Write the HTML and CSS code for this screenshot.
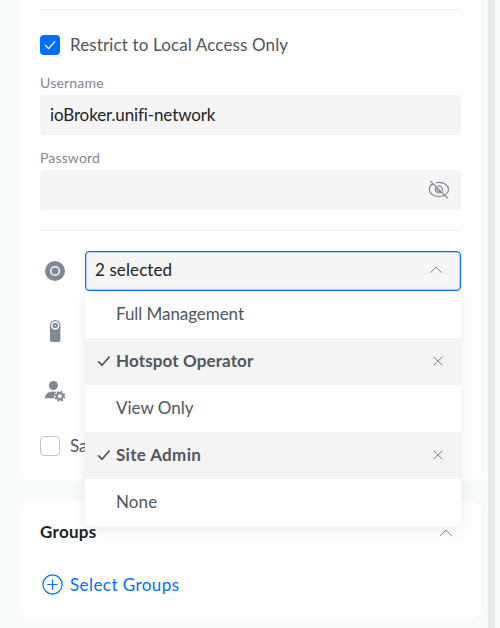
FILE: index.html
```html
<!DOCTYPE html>
<html lang="en">
<head>
<meta charset="utf-8">
<title>Admin</title>
<link rel="stylesheet" href="styles.css">
</head>
<body>
<div class="page">
  <main class="content">
    <section class="card access">
      <hr class="divider">
      <label class="check-row">
        <span class="checkbox checked"><svg width="20" height="20" viewBox="0 0 20 20"><path d="M5.3 10.2 8.6 13.6 14.8 6.6" fill="none" stroke="#fff" stroke-width="1.3" stroke-linecap="round" stroke-linejoin="round"/></svg></span>
        <span class="t-restrict">Restrict to Local Access Only</span>
      </label>
      <div class="field">
        <div class="label"><span class="t-user">Username</span></div>
        <div class="input"><span class="t-io">ioBroker.unifi-network</span></div>
      </div>
      <div class="field">
        <div class="label"><span class="t-pass">Password</span></div>
        <div class="input"><svg class="eye" width="22" height="20" viewBox="0 0 22 20" fill="none" stroke="#808893" stroke-width="1.2" stroke-linecap="round"><path d="M5 3.9C2.8 5 1.4 7 1.4 9.5c0 4 4.2 7 9.6 7 1.8 0 3.5-.4 4.9-1M8.1 2.8C9 2.5 10 2.4 11 2.4c5.3 0 9.5 3.1 9.5 7.1 0 1.9-1 3.5-2.5 4.8"/><path d="M8.2 7.2c-2 2.6-.2 5.8 2.8 5.8 1 0 1.9-.3 2.5-.9M9.9 6.1c2.8-.7 5.3 1.8 4.5 4.4"/><path d="M9.2 8.4c-.8 1.9 1 3.7 2.9 2.8"/><path d="M2.6 1.4 19.3 17.8"/></svg></div>
      </div>
      <hr class="divider">
      <div class="roles">
        <div class="app-icons">
          <svg width="30" height="40" viewBox="0 0 30 40"><circle cx="15" cy="20" r="10" fill="#808893"/><circle cx="15" cy="20" r="4.35" fill="none" stroke="#fff" stroke-width="1.5"/></svg>
          <svg width="30" height="40" viewBox="0 0 30 40"><path d="M10 14.2a5.2 5.2 0 0 1 10.4 0V29a2 2 0 0 1-2 2H12a2 2 0 0 1-2-2z" fill="#808893"/><circle cx="15.2" cy="14.5" r="3.4" fill="#808893" stroke="#fff" stroke-width="1.5"/><circle cx="15.2" cy="14.5" r=".7" fill="#fff"/><circle cx="15.2" cy="22.2" r=".5" fill="#b3b8be"/></svg>
          <svg width="30" height="40" viewBox="0 0 30 40"><circle cx="13.4" cy="14.5" r="4.5" fill="#808893"/><path d="M5 27.3c0-4 3.2-6.8 8-6.8 1.3 0 2.4.2 3.4.5-2.4 1.7-2.9 4.1-1.8 6.3z" fill="#808893"/><circle cx="19.8" cy="25.2" r="3.1" fill="#fff" stroke="#808893" stroke-width="2.1"/><circle cx="19.8" cy="25.2" r="4.6" fill="none" stroke="#808893" stroke-width="1.7" stroke-dasharray="2 1.613"/></svg>
        </div>
        <div class="select">
          <span class="t-selected">2 selected</span>
          <svg class="chevron" width="14" height="10" viewBox="0 0 14 10"><path d="M1.2 7.8 7 2.2l5.8 5.6" fill="none" stroke="#808893" stroke-width="1"/></svg>
          <div class="menu">
            <div class="option"><span class="t-full">Full Management</span></div>
            <div class="option selected"><svg class="tick" width="14" height="12" viewBox="0 0 14 12"><path d="M1.2 6.4 5 10.2 12.6 1.5"/></svg><span class="t-hot">Hotspot Operator</span><svg class="remove" width="10" height="10" viewBox="0 0 10 10"><path d="m.7.7 8.6 8.6M9.3.7.7 9.3"/></svg></div>
            <div class="option"><span class="t-view">View Only</span></div>
            <div class="option selected"><svg class="tick" width="14" height="12" viewBox="0 0 14 12"><path d="M1.2 6.4 5 10.2 12.6 1.5"/></svg><span class="t-site">Site Admin</span><svg class="remove" width="10" height="10" viewBox="0 0 10 10"><path d="m.7.7 8.6 8.6M9.3.7.7 9.3"/></svg></div>
            <div class="option"><span class="t-none">None</span></div>
          </div>
        </div>
      </div>
      <div class="check-row save"><span class="checkbox"></span><span>Sa</span></div>
    </section>
    <section class="card groups">
      <div class="groups-head"><span class="t-groups">Groups</span><svg width="14" height="10" viewBox="0 0 14 10"><path d="M1.2 7.8 7 2.2l5.8 5.6" fill="none" stroke="#808893" stroke-width="1"/></svg></div>
      <div class="add"><svg width="22" height="22" viewBox="0 0 22 22" fill="none" stroke="#006fff" stroke-width="1.2" stroke-linecap="round"><circle cx="11.5" cy="10.5" r="9.6"/><path d="M6.8 10.5h9.4M11.5 5.8v9.4"/></svg><span class="t-add">Select Groups</span></div>
    </section>
  </main>
  <div class="scrollbar"></div>
</div>
</body>
</html>
```
FILE: styles.css
```css
* { box-sizing: border-box; }
body { margin: 0; background: #f9fbfa; font-family: Lato, "Liberation Sans", sans-serif; font-size: 17px; line-height: 20px; color: #50565e; font-variant-ligatures: none; }
svg { display: block; flex: none; }
span { white-space: nowrap; }
.page { display: flex; height: 628px; overflow: hidden; }
.content { width: 488px; padding-left: 20px; }
.scrollbar { width: 7px; background: #e7eae9; }
.card { width: 461px; padding: 0 20px; background: #fff; }
.access { height: 481px; padding-top: 9px; border-radius: 0 0 10px 10px; }
.divider { height: 1px; margin: 0; border: 0; background: #edeef0; }
.check-row { display: flex; gap: 10px; height: 20px; margin-top: 25px; }
.checkbox { width: 20px; height: 20px; border: 1px solid #c2c6cc; border-radius: 4px; background: #fff; }
.checkbox.checked { border: 0; background: #006fff; }
.field { height: 75px; }
.check-row + .field { margin-top: 20px; }
.label { height: 20px; line-height: 16px; font-size: 14px; color: #808893; }
.input { display: flex; align-items: center; height: 40px; padding: 0 11.5px 0 10px; border-radius: 4px; background: #f5f5f5; color: #212327; }
.eye { margin-left: auto; }
.field + .divider { margin-top: 5px; }
.roles { display: flex; gap: 15px; height: 180px; margin-top: 20px; }
.app-icons { display: flex; flex-direction: column; gap: 20px; width: 30px; }
.select { position: relative; display: flex; align-items: center; justify-content: space-between; width: 376px; height: 40px; padding: 0 17px 2px 9px; border: 1px solid #006fff; border-radius: 4px; background: #f5f5f5; box-shadow: inset 0 0 0 1px #b5d2fa; color: #212327; }
.menu { position: absolute; z-index: 1; left: -1px; top: 39px; width: 376px; overflow: hidden; border-radius: 4px; background: #fff; box-shadow: 0 4px 16px rgba(0, 0, 0, .08); }
.option { display: flex; align-items: center; height: 47px; padding: 0 18.5px 2px 31px; color: #50565e; }
.option.selected { padding-left: 12px; background: #f4f4f5; font-weight: 700; }
.tick { margin-right: 5px; fill: none; stroke: #50565e; stroke-width: 1.7; }
.remove { margin-left: auto; fill: none; stroke: #808893; stroke-width: 1; }
.save { margin-top: 5px; }
.groups { height: 118px; margin-top: 20px; padding: 21px 20px 0; border-radius: 10px; }
.groups-head { display: flex; align-items: center; justify-content: space-between; height: 20px; padding-right: 8px; color: #212327; font-weight: 700; }
.groups-head svg { position: relative; top: 1px; }
.add { display: flex; align-items: center; gap: 7px; height: 22px; margin: 32px 0 0 1px; color: #006fff; }
.t-restrict { letter-spacing: .13px; }
.t-user { letter-spacing: .2px; }
.t-pass { letter-spacing: .15px; }
.t-io { letter-spacing: -.12px; }
.t-selected { letter-spacing: .1px; }
.t-full { letter-spacing: -.06px; }
.t-hot { letter-spacing: .13px; }
.t-site { letter-spacing: .33px; }
.t-groups { letter-spacing: .3px; }
.t-add { letter-spacing: .43px; }
.t-none { letter-spacing: .1px; }
```
